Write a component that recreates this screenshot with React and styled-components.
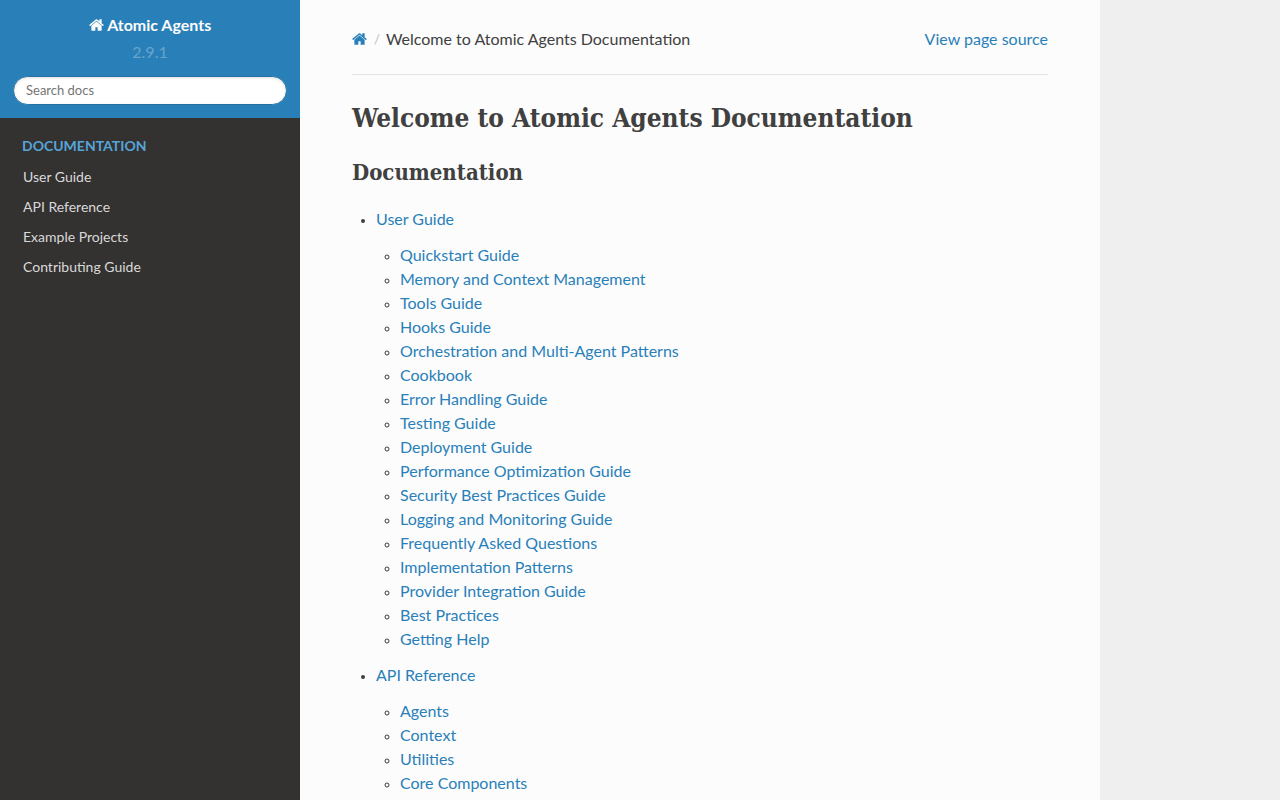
import React from "react";
import styled, { createGlobalStyle } from "styled-components";

const GlobalStyle = createGlobalStyle`
  *, *::before, *::after { box-sizing: border-box; }
  body {
    margin: 0;
    background: #efefef;
    color: #404040;
    font: 400 16px/24px Lato, "Liberation Sans", sans-serif;
  }
  a { color: #2980b9; text-decoration: none; }
`;

const Layout = styled.div`
  display: flex;
  align-items: flex-start;
  min-height: 100vh;
`;

const Sidebar = styled.nav`
  position: sticky;
  top: 0;
  flex: 0 0 300px;
  height: 100vh;
  overflow: hidden;
  background: #343131;
`;

const SearchArea = styled.div`
  display: flex;
  flex-direction: column;
  align-items: center;
  padding: 13px;
  background: #2980b9;
`;

const Brand = styled.a`
  color: #fcfcfc;
  font-weight: 700;
`;

const Version = styled.div`
  margin: 3px 0 12px;
  color: rgba(255, 255, 255, 0.3);
`;

const SearchForm = styled.form`
  width: 100%;
`;

const SearchInput = styled.input`
  display: block;
  width: 100%;
  height: 29px;
  padding: 5px 12px 7px;
  border: 1px solid #2472a4;
  border-radius: 50px;
  background: #fff;
  box-shadow: inset 0 1px 3px #ddd;
  color: #404040;
  font: 400 13px/15px Lato, "Liberation Sans", sans-serif;
  &::placeholder { color: #757575; }
`;

const Caption = styled.p`
  margin: 12px 0 0;
  padding: 0 22px;
  color: #55a5d9;
  font-size: 14px;
  font-weight: 700;
  line-height: 32px;
  text-transform: uppercase;
`;

const Menu = styled.ul`
  margin: 0;
  padding: 0;
  list-style: none;
`;

const MenuLink = styled.a`
  display: block;
  padding: 6px 23px;
  color: #d9d9d9;
  font-size: 14px;
  line-height: 18px;
`;

const Content = styled.main`
  flex: 0 1 800px;
  min-width: 0;
  min-height: 100vh;
  padding: 27px 52px;
  background: #fcfcfc;
`;

const Breadcrumbs = styled.ul`
  display: flex;
  margin: 0;
  padding: 0;
  list-style: none;
`;

const Crumb = styled.li`
  margin-left: ${(p) => (p.$end ? "auto" : "0")};
`;

const Separator = styled.li`
  padding: 0 6px 0 7px;
  color: #bbb;
  font-size: 13px;
`;

const Rule = styled.hr`
  margin: 23px 0 24px;
  border: 0;
  border-top: 1px solid #e1e4e5;
`;

const Heading = styled.h1`
  margin: 0 0 16px;
  font-family: "DejaVu Serif Condensed", "DejaVu Serif", serif;
  font-weight: 700;
  font-size: ${(p) => (p.$sub ? "22px" : "26px")};
  line-height: 38px;
`;

const Toc = styled.ul`
  margin: 0;
  padding: 0;
  list-style: ${(p) => (p.$nested ? "circle" : "disc")};
`;

const TocItem = styled.li`
  margin-left: 24px;
  &::marker { font-size: 13px; }
  & > ul { margin: 12px 0; }
`;

const HomeSvg = styled.svg`
  display: inline-block;
  width: 15px;
  height: 16px;
  vertical-align: -2px;
  fill: currentColor;
`;

const HomeIcon = () => (
  <HomeSvg viewBox="0 0 1664 1792" aria-hidden="true">
    <path d="M1408 992v480q0 26-19 45t-45 19H960v-384H704v384H320q-26 0-45-19t-19-45V992q0-1 .5-3t.5-3l575-474 575 474q1 2 1 6zm223-69l-62 74q-8 9-21 11h-3q-13 0-21-7L832 424 140 1001q-12 8-24 7-13-2-21-11l-62-74q-8-10-7-23.500T37 878L756 279q32-26 76-26t76 26l244 204V288q0-14 9-23t23-9h192q14 0 23 9t9 23v408l219 182q10 8 11 21.500t-7 23.500z" />
  </HomeSvg>
);

const menuItems = ["User Guide", "API Reference", "Example Projects", "Contributing Guide"];

const sections = [
  {
    title: "User Guide",
    pages: [
      "Quickstart Guide",
      "Memory and Context Management",
      "Tools Guide",
      "Hooks Guide",
      "Orchestration and Multi-Agent Patterns",
      "Cookbook",
      "Error Handling Guide",
      "Testing Guide",
      "Deployment Guide",
      "Performance Optimization Guide",
      "Security Best Practices Guide",
      "Logging and Monitoring Guide",
      "Frequently Asked Questions",
      "Implementation Patterns",
      "Provider Integration Guide",
      "Best Practices",
      "Getting Help",
    ],
  },
  {
    title: "API Reference",
    pages: ["Agents", "Context", "Utilities", "Core Components"],
  },
];

export default function App() {
  return (
    <>
      <GlobalStyle />
      <Layout>
        <Sidebar aria-label="Main">
          <SearchArea>
            <Brand href="#"><HomeIcon /> Atomic Agents</Brand>
            <Version>2.9.1</Version>
            <SearchForm role="search">
              <SearchInput type="text" placeholder="Search docs" aria-label="Search docs" />
            </SearchForm>
          </SearchArea>
          <Caption>Documentation</Caption>
          <Menu>
            {menuItems.map((item) => (
              <li key={item}><MenuLink href="#">{item}</MenuLink></li>
            ))}
          </Menu>
        </Sidebar>
        <Content>
          <Breadcrumbs aria-label="Page navigation">
            <Crumb><a href="#" aria-label="Home"><HomeIcon /></a></Crumb>
            <Separator aria-hidden="true">/</Separator>
            <Crumb>Welcome to Atomic Agents Documentation</Crumb>
            <Crumb $end><a href="#">View page source</a></Crumb>
          </Breadcrumbs>
          <Rule />
          <Heading>Welcome to Atomic Agents Documentation</Heading>
          <Heading as="h2" $sub>Documentation</Heading>
          <Toc>
            {sections.map((section) => (
              <TocItem key={section.title}>
                <a href="#">{section.title}</a>
                <Toc $nested>
                  {section.pages.map((page) => (
                    <TocItem key={page}><a href="#">{page}</a></TocItem>
                  ))}
                </Toc>
              </TocItem>
            ))}
          </Toc>
        </Content>
      </Layout>
    </>
  );
}
